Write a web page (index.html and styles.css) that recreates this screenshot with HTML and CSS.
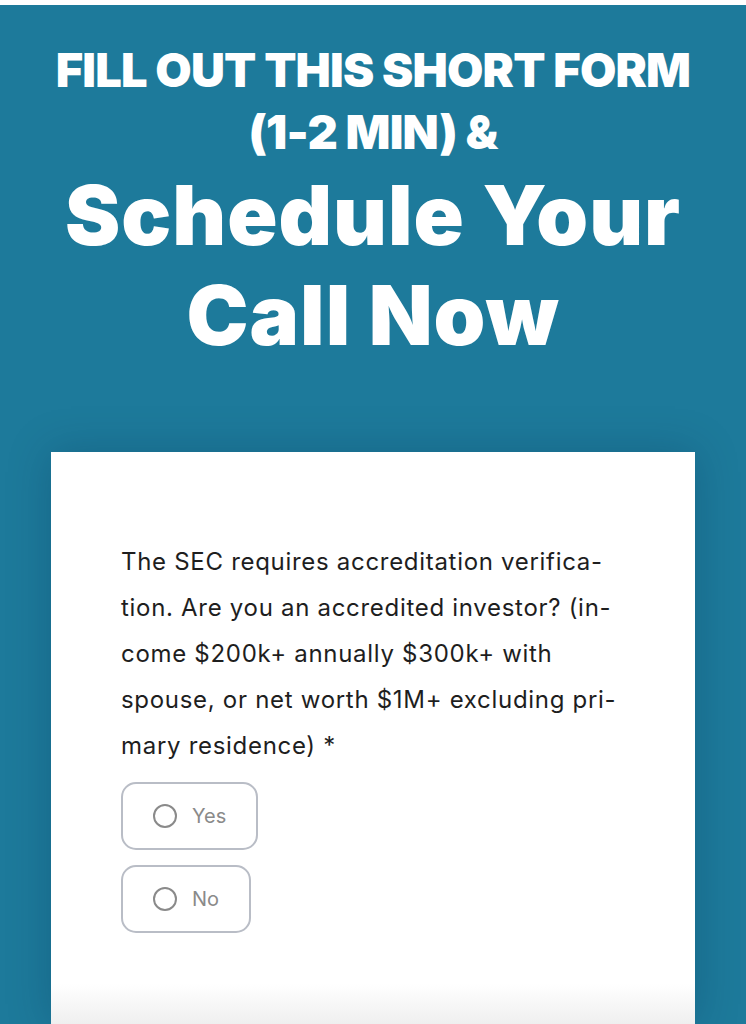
FILE: index.html
```html
<!DOCTYPE html>
<html lang="en">

<head>
    <meta charset="UTF-8">
    <meta name="viewport" content="width=device-width, initial-scale=1.0">
    <title>Schedule Your Call</title>
    <link rel="stylesheet" href="styles.css">
</head>

<body>
    <div class="page">
        <!-- Headline -->
        <header class="hero">
            <h2 class="hero-top">FILL OUT THIS SHORT FORM<br>(1-2 MIN) &amp;</h2>
            <h1 class="hero-main">Schedule Your<br>Call Now</h1>
        </header>

        <!-- Form card -->
        <div class="card">
            <form class="survey">
                <p class="question">The SEC requires accreditation verifica-<br>tion. Are you an accredited investor? (in-<br>come $200k+ annually $300k+ with<br>spouse, or net worth $1M+ excluding pri-<br>mary residence) *</p>

                <div class="options">
                    <label class="option">
                        <input type="radio" name="accredited" value="yes">
                        <span class="dot"></span>
                        <span class="option-text">Yes</span>
                    </label>
                    <label class="option">
                        <input type="radio" name="accredited" value="no">
                        <span class="dot"></span>
                        <span class="option-text">No</span>
                    </label>
                </div>
            </form>
            <div class="card-fade"></div>
        </div>
    </div>
</body>

</html>
```

FILE: styles.css
```css
/* page */
body {
    margin: 0;
    padding: 0;
    background: #ffffff;
    font-family: 'Inter', 'Noto Sans', sans-serif;
}

.page {
    margin-top: 5px;
    background: #1d7a9b;
    min-height: 1019px;
    overflow: hidden;
}

/* headline */
.hero {
    text-align: center;
    color: #ffffff;
    padding-top: 34px;
    padding-bottom: 87px;
}

.hero-top {
    margin: 0;
    font-family: 'Inter', sans-serif;
    font-weight: 900;
    font-size: 47px;
    line-height: 62px;
    letter-spacing: -0.8px;
}

.hero-main {
    margin: 2px 0 0;
    font-family: 'Inter', sans-serif;
    font-weight: 900;
    font-size: 83px;
    line-height: 100px;
    letter-spacing: 1px;
}

/* card */
.card {
    position: relative;
    margin: 0 51px;
    background: #ffffff;
    min-height: 572px;
    box-shadow: 0 0 40px rgba(0, 40, 70, 0.25);
}

.survey {
    padding: 87px 70px 0;
}

.question {
    margin: 0;
    font-size: 24px;
    line-height: 46px;
    letter-spacing: 0.7px;
    color: #1e1e1e;
}

.options {
    display: flex;
    flex-direction: column;
    align-items: flex-start;
    gap: 15px;
    margin-top: 13px;
}

.option {
    display: flex;
    align-items: center;
    gap: 15px;
    height: 64px;
    padding: 0 30px;
    border: 2px solid #b9bdc6;
    border-radius: 15px;
    cursor: pointer;
}

.option input {
    display: none;
}

.dot {
    width: 20px;
    height: 20px;
    border: 2.5px solid #8a8a8a;
    border-radius: 50%;
}

.option-text {
    font-size: 20px;
    color: #8a8a8a;
}

/* grey fade at the bottom of the card */
.card-fade {
    position: absolute;
    left: 0;
    right: 0;
    bottom: 0;
    height: 40px;
    background: linear-gradient(to bottom, rgba(240, 240, 240, 0), #efefef);
}
```
